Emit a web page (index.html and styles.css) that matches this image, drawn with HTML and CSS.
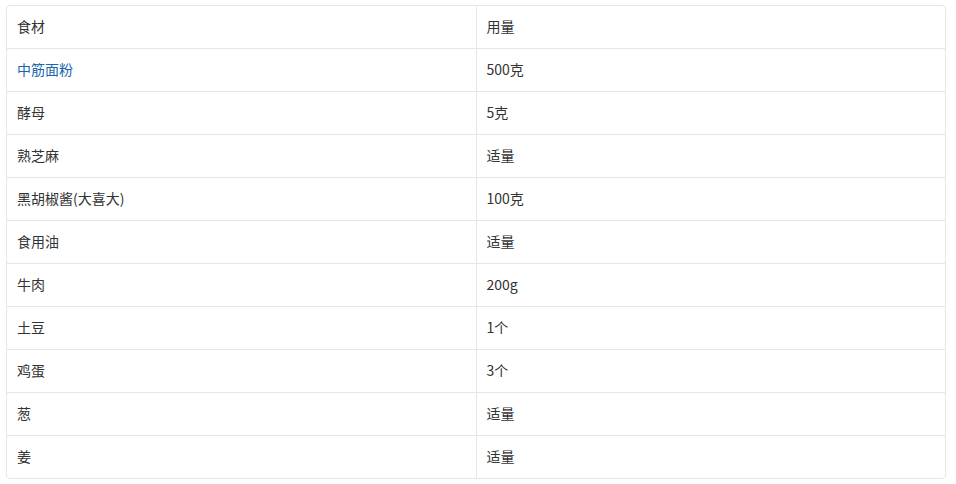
FILE: index.html
```html
<!DOCTYPE html>
<html>
<head>
<meta charset="utf-8">
<link rel="stylesheet" href="styles.css">
</head>
<body>
<div class="wrap">
<table class="tbl">
<tr><td>食材</td><td>用量</td></tr>
<tr><td><a class="link" href="#">中筋面粉</a></td><td>500克</td></tr>
<tr><td>酵母</td><td>5克</td></tr>
<tr><td>熟芝麻</td><td>适量</td></tr>
<tr><td>黑胡椒酱(大喜大)</td><td>100克</td></tr>
<tr><td>食用油</td><td>适量</td></tr>
<tr><td>牛肉</td><td>200g</td></tr>
<tr><td>土豆</td><td>1个</td></tr>
<tr><td>鸡蛋</td><td>3个</td></tr>
<tr><td>葱</td><td>适量</td></tr>
<tr><td>姜</td><td>适量</td></tr>
</table>
</div>
</body>
</html>
```
FILE: styles.css
```css
html, body { margin: 0; padding: 0; background: #fff; }
body {
  font-family: "Microsoft YaHei", "Noto Sans CJK SC", "Noto Sans", sans-serif;
  font-size: 14px;
  color: #333;
}
.wrap {
  margin: 5px 0 0 6px;
  width: 938px;
  border: 1px solid #e6e6e6;
  border-radius: 4px;
  overflow: hidden;
}
.tbl {
  width: 100%;
  border-collapse: collapse;
  table-layout: fixed;
}
.tbl td {
  box-sizing: border-box;
  height: 42px;
  padding: 0 10px 2px;
  vertical-align: middle;
  border-top: 1px solid #e6e6e6;
  line-height: 20px;
}
.tbl tr + tr td { height: 43px; }
.tbl tr:first-child td { border-top: none; }
.tbl td + td { border-left: 1px solid #e6e6e6; }
.tbl td:first-child { width: 469px; }
.link { color: #1a65ad; text-decoration: none; }
```
